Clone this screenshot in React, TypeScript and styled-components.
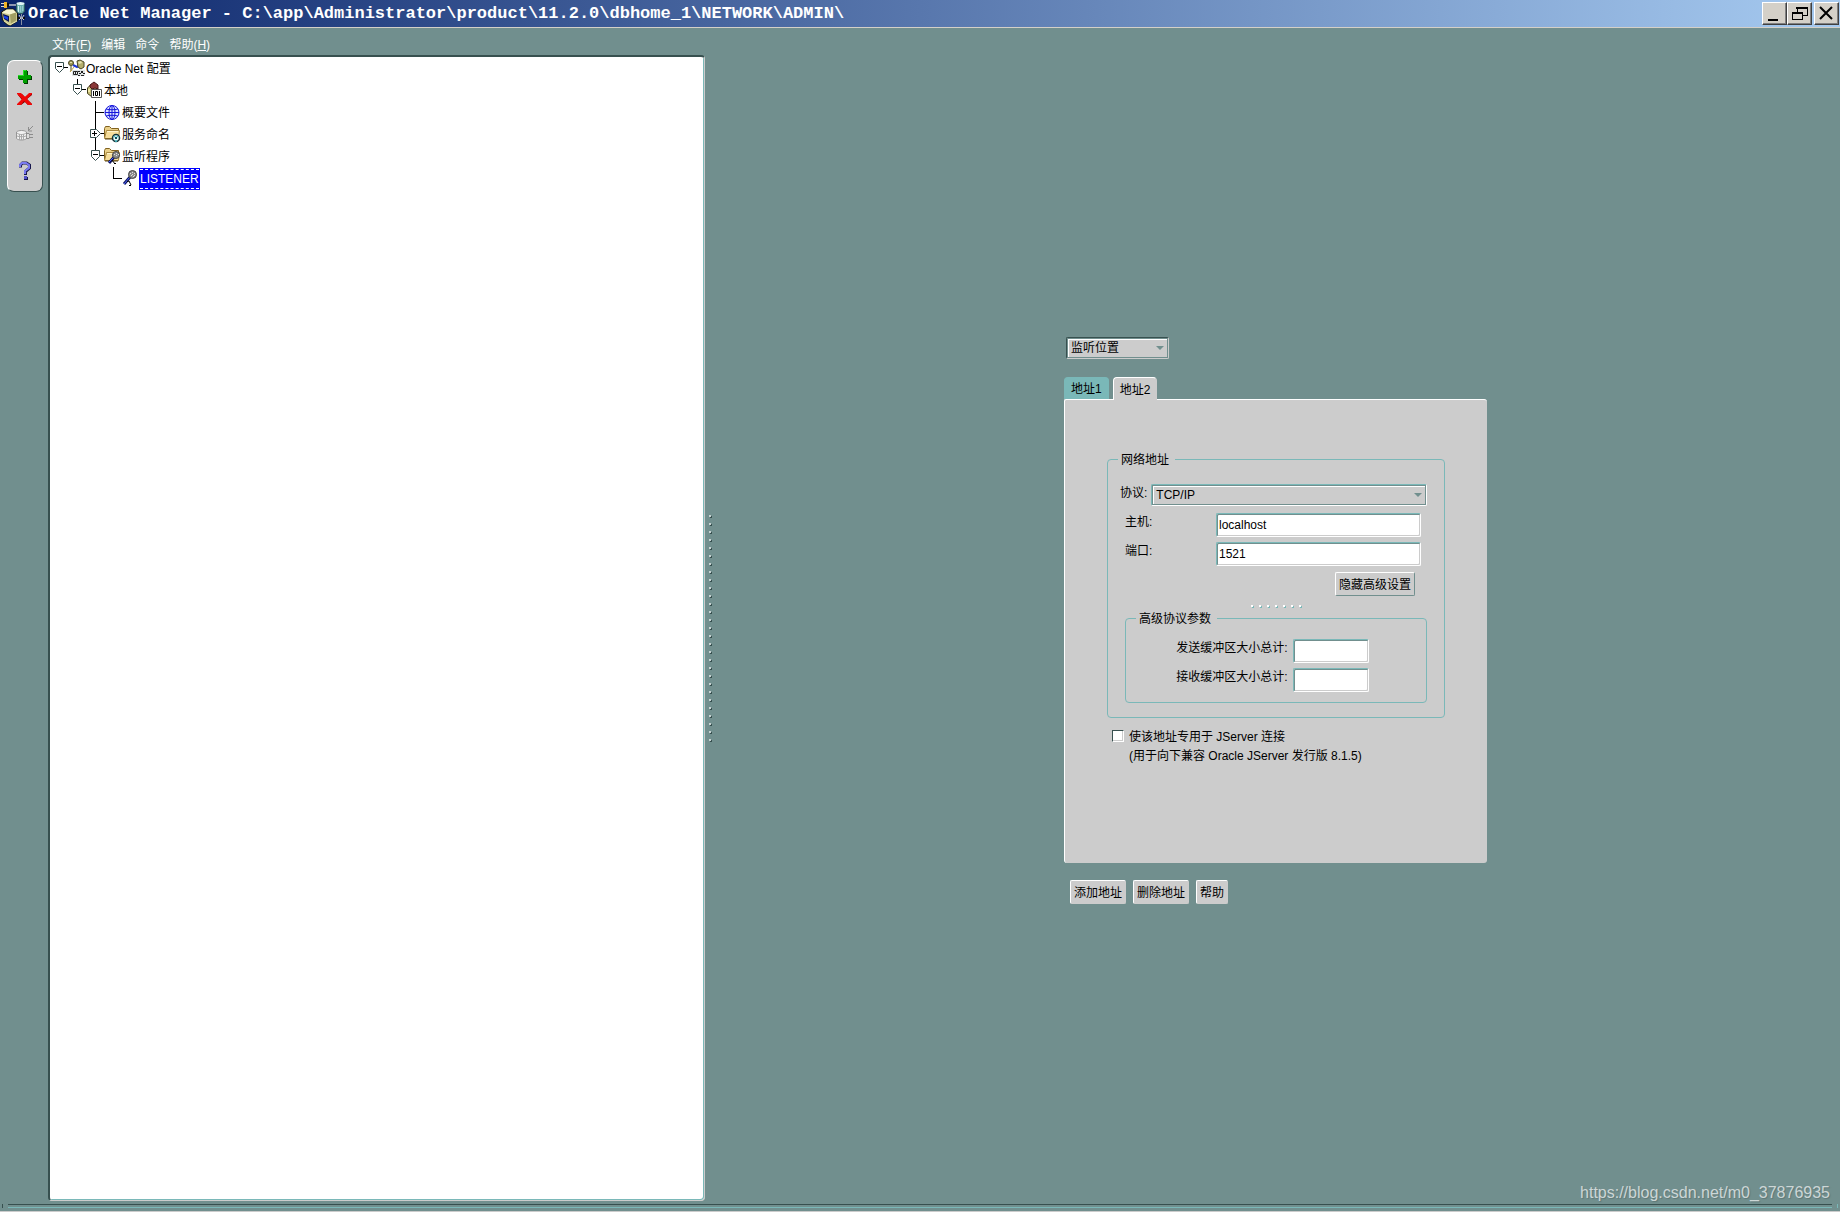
import React, { useState } from "react";
import styled, { createGlobalStyle, css } from "styled-components";

const color = {
  teal: "#718f8e",
  aqua: "#7ab8b8",
  dark: "#37504f",
  face: "#cccccc",
  chrome: "#d4d0c8",
};

const GlobalStyle = createGlobalStyle`
  * { box-sizing: border-box; }
  body {
    margin: 0;
    background: ${color.teal};
    color: #000;
    font: 12px/18px "Liberation Sans", "Noto Sans CJK SC", sans-serif;
  }
  button, input, select { font: inherit; color: inherit; margin: 0; border-radius: 0; }
`;

const Window = styled.div`
  position: relative;
  min-height: 100vh;
  display: flex;
  flex-direction: column;
  background: ${color.teal};
`;

/* ---------- title bar ---------- */
const TitleBar = styled.header`
  display: flex;
  align-items: center;
  height: 28px;
  padding-right: 1px;
  border-bottom: 1px solid ${color.chrome};
  background: linear-gradient(90deg, #0a246a, #a6caf0);
`;

const Title = styled.h1`
  flex: 1;
  margin: 0;
  padding-left: 2px;
  overflow: hidden;
  white-space: nowrap;
  color: #fff;
  font: bold 17px/26px "Liberation Mono", "Noto Sans CJK SC", monospace;
`;

const WindowButton = styled.button<{ $apart?: boolean }>`
  display: grid;
  place-items: center;
  width: 25px;
  height: 23px;
  padding: 0;
  margin-left: ${(p) => (p.$apart ? "2px" : "0")};
  background: ${color.chrome};
  border: 1px solid;
  border-color: #fff #404040 #404040 #fff;
  box-shadow: inset -1px -1px 0 #808080;
`;

/* ---------- menu ---------- */
const MenuBar = styled.nav`
  display: flex;
  gap: 10px;
  height: 27px;
  padding: 8px 0 0 52px;
`;

const MenuItem = styled.button`
  height: 18px;
  padding: 0;
  border: 0;
  background: none;
  color: #fff;
  white-space: nowrap;
`;

/* ---------- main areas ---------- */
const Workspace = styled.main`
  flex: 1;
  display: grid;
  grid-template-columns: 48px minmax(0, 657fr) 6px minmax(0, 1129fr);
`;

const ToolColumn = styled.aside`
  padding: 5px 5px 0 7px;
`;

const Toolbar = styled.div`
  display: flex;
  flex-direction: column;
  align-items: center;
  padding: 5px 0 9px;
  border: 1px solid;
  border-color: #fff ${color.dark} ${color.dark} #fff;
  border-radius: 7px;
  background: ${color.face};
`;

const ToolButton = styled.button<{ $space?: number }>`
  display: grid;
  place-items: center;
  width: 26px;
  height: 22px;
  padding: 0;
  margin-top: ${(p) => p.$space ?? 0}px;
  border: 0;
  background: none;
`;

const TreePanel = styled.section`
  padding-top: 1px;
  background: #fff;
  border: solid;
  border-width: 2px 1px 1px 2px;
  border-color: ${color.dark} ${color.face} ${color.face} ${color.dark};
  border-radius: 4px;
  box-shadow: inset -1px -1px 0 ${color.aqua};
`;

const Tree = styled.ul`
  list-style: none;
  margin: 0;
  padding: 0;
`;

const TreeRow = styled.li<{ $depth: number }>`
  display: flex;
  align-items: center;
  height: 22px;
  padding-left: ${(p) => p.$depth * 18}px;
  white-space: nowrap;
`;

const Drawing = styled.svg`
  display: block;
  flex: none;
  overflow: visible;
`;

const NodeLabel = styled.span<{ $selected?: boolean }>`
  line-height: 22px;
  ${(p) =>
    p.$selected &&
    css`
      line-height: 18px;
      color: #fff;
      background: #00f;
      border: 1px dashed #fff;
      border-width: 1px 0;
      outline: 1px solid #00f;
    `}
`;

const Splitter = styled.div`
  display: flex;
  flex-direction: column;
  justify-content: center;
  align-items: flex-end;
  gap: 6px;
`;

const Dot = styled.i<{ $light: string; $shade: string }>`
  width: 2px;
  height: 2px;
  background: ${(p) => p.$light};
  box-shadow: 1px 1px 0 ${(p) => p.$shade};
`;

const Detail = styled.section`
  display: flex;
  align-items: center;
  justify-content: center;
  padding-bottom: 16px;
`;

const Form = styled.form`
  width: 423px;
`;

/* ---------- controls ---------- */
const SelectBox = styled.span<{ $tone: string; $edge: string }>`
  position: relative;
  display: block;
  height: 22px;
  border: 1px solid;
  border-color: ${(p) => p.$tone} ${(p) => p.$edge} ${(p) => p.$edge} ${(p) => p.$tone};
  border-radius: 2px;
  background: ${color.face};

  &::after {
    content: "";
    position: absolute;
    top: 8px;
    right: 4px;
    border: 4px solid transparent;
    border-top-color: ${color.teal};
    border-bottom: 0;
    pointer-events: none;
  }
`;

const Select = styled.select`
  appearance: none;
  display: block;
  width: 100%;
  height: 20px;
  padding: 0 14px 0 3px;
  border: 1px solid ${color.teal};
  background: transparent;
  box-shadow: inset 1px 1px 0 #fff;
  outline: 0;
`;

const LocationSelect = styled.div`
  width: 103px;
  margin: 0 0 18px 2px;
`;

const TextInput = styled.input<{ $short?: boolean }>`
  width: ${(p) => (p.$short ? 76 : 205)}px;
  height: 24px;
  padding: 0 2px;
  background: #fff;
  border: 1px solid;
  border-color: ${color.aqua} #fff #fff ${color.aqua};
  border-radius: 2px;
  box-shadow: inset 1px 1px 0 ${color.teal}, inset -1px -1px 0 ${color.face};
  outline: 0;
`;

const Button = styled.button<{ $shade?: string }>`
  height: 24px;
  padding: 2px 3px 0;
  background: ${color.face};
  border: 1px solid;
  border-color: #fff ${(p) => p.$shade ?? color.face} ${(p) => p.$shade ?? color.face} #fff;
  border-radius: 2px;
  white-space: nowrap;
`;

const Tabs = styled.div`
  display: flex;
  gap: 4px;
`;

const Tab = styled.button<{ $active?: boolean }>`
  height: 22px;
  padding: 2px 6px 0;
  border: 1px solid ${color.aqua};
  border-bottom: 0;
  border-radius: 4px 4px 0 0;
  background: ${color.aqua};
  ${(p) =>
    p.$active &&
    css`
      height: 23px;
      margin-bottom: -1px;
      z-index: 1;
      background: ${color.face};
      border-color: #fff ${color.face} ${color.face} #fff;
    `}
`;

const TabPanel = styled.div`
  padding: 52px 42px 97px;
  background: ${color.face};
  border: solid #fff;
  border-width: 1px 0 0 1px;
  border-radius: 2px 3px 3px 3px;
`;

const Group = styled.fieldset<{ $nested?: boolean }>`
  min-width: 0;
  margin: ${(p) => (p.$nested ? "4px 17px 0" : "0")};
  padding: ${(p) => (p.$nested ? "12px 0 10px" : "16px 0 14px")};
  border: 1px solid ${color.aqua};
  border-radius: 4px;
`;

const Legend = styled.legend`
  margin-left: 10px;
  padding: 0 6px 0 3px;
  line-height: 16px;
`;

const ProtocolRow = styled.div`
  display: flex;
  gap: 4px;
  padding: 0 17px 0 12px;
  margin-bottom: 7px;

  ${SelectBox} { flex: 1; }
`;

const FieldRow = styled.div`
  display: flex;
  justify-content: space-between;
  padding: 0 23px 0 17px;
  margin-bottom: 5px;
`;

const BufferRow = styled.div`
  display: flex;
  justify-content: center;
  gap: 5px;
  padding-right: 7px;

  & + & { margin-top: 5px; }
`;

const ToggleRow = styled.div`
  display: flex;
  justify-content: flex-end;
  margin-top: 6px;
  padding-right: 29px;
`;

const DotRow = styled.div`
  display: flex;
  justify-content: center;
  gap: 6px;
  margin-top: 9px;
`;

const Dedicated = styled.div`
  display: flex;
  gap: 5px;
  margin-top: 10px;
  padding-left: 5px;
  line-height: 19px;
`;

const Checkbox = styled.input`
  appearance: none;
  width: 12px;
  height: 12px;
  margin-top: 2px;
  background: #fff;
  border: 1px solid;
  border-color: ${color.dark} #fff #fff ${color.dark};
  box-shadow: inset -1px -1px 0 ${color.face};

  &:checked { background: ${color.dark}; }
`;

const Actions = styled.div`
  display: flex;
  gap: 7px;
  padding: 17px 0 0 6px;
`;

/* ---------- status strip ---------- */
const StatusBar = styled.footer`
  display: flex;
  justify-content: space-between;
  gap: 5px;
  height: 11px;
  padding: 3px 2px 0;
  border-bottom: 1px solid ${color.face};
`;

const Tick = styled.i<{ $color: string }>`
  width: 1px;
  height: 4px;
  background: ${(p) => p.$color};
`;

const Groove = styled.div`
  flex: 1;
  height: 4px;
  border-top: 1px solid ${color.dark};
  border-bottom: 1px solid ${color.aqua};
`;

const Watermark = styled.a`
  position: absolute;
  right: 10px;
  bottom: 9px;
  color: #ccd6d6;
  font-size: 16px;
  line-height: 20px;
  text-decoration: none;
  text-shadow: 1px 1px 1px #5f7776;
`;

/* ---------- drawings ---------- */
const AppIcon = () => (
  <Drawing width="26" height="26" viewBox="0 0 26 26" aria-hidden="true">
    <path d="M1.500 11l5-3h7l4 4v8l-7 4.500-3-.5-5-5z" fill="#c9c78c" stroke="#16160e" />
    <path d="M2 11.500L7 8.500h6l3 3-6 2z" fill="#f6f4d0" />
    <path d="M10 13.500l6-2v8l-5 3z" fill="#a29f62" />
    <path d="M3 13l6 2v6l-5-3z" fill="#0a1450" />
    <path d="M4 14.500l4 1.500v3l-4-2z" fill="#1840e8" />
    <path d="M4 20l6 4 7-4" fill="none" stroke="#e9e6b0" />
    <path d="M1 2.500h3M1 5.500h3" stroke="#d8d8d8" />
    <path d="M4 1h3v6H4z" fill="#f0b428" />
    <path d="M7 2h2v4H7z" fill="#111" />
    <path d="M9 4h7" stroke="#9098b0" strokeWidth="2" />
    <path d="M16.500 3v7l2 2.500h4l2-2.500V3z" fill="#6fb0b0" stroke="#2c5a60" />
    <ellipse cx="20.500" cy="2.500" rx="4" ry="1.500" fill="#e0f6f6" />
    <path d="M18.500 5v6" stroke="#d6f2f2" />
    <path d="M20.500 5v6M22.500 5v5" stroke="#95cccc" />
    <path d="M21.500 13v11" stroke="#8890a4" />
    <path d="M19 14l2 3-2 2M24 14l-2 3 2 2" fill="none" stroke="#c8ccd6" />
    <path d="M18 16h2v2h-2zM23 16h2v2h-2z" fill="#101010" />
  </Drawing>
);

const MinimizeGlyph = () => (
  <Drawing width="19" height="17" viewBox="0 0 19 17" aria-hidden="true">
    <path d="M3 14h10v2H3z" />
  </Drawing>
);

const RestoreGlyph = () => (
  <Drawing width="17" height="15" viewBox="0 0 17 15" shapeRendering="crispEdges" aria-hidden="true">
    <path d="M6 1h10v8h-4M6 1v5" fill="none" stroke="#000" />
    <path d="M5 1h11v2H5zM1 6h11v2H1z" />
    <path d="M1.500 6.500h10v7h-10z" fill="none" stroke="#000" />
  </Drawing>
);

const CloseGlyph = () => (
  <Drawing width="15" height="15" viewBox="0 0 15 15" aria-hidden="true">
    <path d="M1 1l12 12M13 1L1 13" stroke="#000" strokeWidth="2" />
  </Drawing>
);

const AddGlyph = () => (
  <Drawing width="15" height="15" viewBox="0 0 15 15" shapeRendering="crispEdges" aria-hidden="true">
    <path d="M6 1h4v5h4v4h-4v4H6v-4H1V6h5z" fill="#003c00" />
    <path d="M5 0h4v5h4v4H9v4H5V9H0V5h5z" fill="#00a000" />
    <path d="M5 0h3v1H6v5H0V5h5z" fill="#26e026" />
  </Drawing>
);

const DeleteGlyph = () => (
  <Drawing width="16" height="13" viewBox="0 0 16 13" aria-hidden="true">
    <path d="M1 1h4l3 3 4-3h3v1l-5 4 5 5v1h-4L8 9l-4 3H1v-1l4-4-4-5z" fill="#7c0000" />
    <path d="M0 0h4l4 4 4-4h3v1l-5 5 5 5v1h-4L7 8l-3 4H0v-1l5-5-5-5z" fill="#f00808" />
  </Drawing>
);

const ConnectGlyph = () => (
  <Drawing width="18" height="16" viewBox="0 0 18 16" aria-hidden="true">
    <path d="M.5 6v6.500c2 2 8 2 10 0V6c-2-2-8-2-10 0z" fill="#f2f2f2" stroke="#969696" />
    <path d="M1 7c2 2 7 2 9 0M1 10c2 1 7 1 9 0M3.500 8v6M5.500 8v6M7.500 8v6" fill="none" stroke="#aaa" />
    <path d="M10 7.500h3v5h-3M13 8.500h4M13 11.500h4M17 0l-5 5M12.500 1v4H16" fill="none" stroke="#8c8c8c" />
    <path d="M11 8h2v4h-2z" fill="#ddd" />
  </Drawing>
);

const HelpGlyph = () => (
  <Drawing width="14" height="20" viewBox="0 0 14 20" aria-hidden="true">
    <path d="M2.500 6.500V4l2-2h4l3 2v3l-4 3.500V14" fill="none" stroke="#16164c" strokeWidth="3" />
    <path d="M2 6V4l2-2h4l3 2v3l-4 3v3" fill="none" stroke="#7a7af0" strokeWidth="2" />
    <path d="M6 15h3v1h1v3H6z" fill="#16164c" />
    <path d="M6 15h3v3H6z" fill="#5050c8" />
  </Drawing>
);

type BranchKind = "root" | "open" | "leaf" | "closed" | "openLast" | "corner";

const Branch = ({ kind }: { kind: BranchKind }) => (
  <Drawing width="18" height="22" viewBox="0 0 18 22" shapeRendering="crispEdges" aria-hidden="true">
    {kind === "open" && <path d="M9.500-1v6" stroke="#000" />}
    {kind === "leaf" && <path d="M9.500-1v23M9 10.500h9" fill="none" stroke="#000" />}
    {kind === "corner" && <path d="M9.500-1v11.500H18" fill="none" stroke="#000" />}
    {kind === "closed" && (
      <>
        <path d="M9.500 0v22M14 9.500h4" fill="none" stroke="#000" />
        <path d="M4.500 5.500h6l4 4-4 4h-6z" fill="#fff" stroke="#37504f" shapeRendering="auto" />
        <path d="M6 9.500h5M8.500 7v5" stroke="#000" />
      </>
    )}
    {(kind === "root" || kind === "open" || kind === "openLast") && (
      <>
        {kind === "openLast" && <path d="M9.500 0v5" stroke="#000" />}
        <path d="M13 9.500h5" stroke="#000" />
        <path d="M5.500 4.500h8v6l-4 4-4-4z" fill="#fff" stroke="#37504f" shapeRendering="auto" />
        <path d="M7 8.500h5" stroke="#000" />
      </>
    )}
  </Drawing>
);

const NetworkIcon = () => (
  <Drawing width="18" height="18" viewBox="0 0 18 18" aria-hidden="true">
    <path d="M5 5l4 2 3-3" fill="none" stroke="#2038d8" strokeWidth="2" />
    <path d="M3 6v5M12 6v3" stroke="#4f4b22" />
    <circle cx="3" cy="3" r="2.500" fill="#a09a58" stroke="#4c4926" />
    <path d="M2 2h2v1H2z" fill="#e6e2b0" />
    <path d="M9 1l3-1 4 2v5l-3 2-3-2z" fill="#b4ae6c" stroke="#4c4926" />
    <path d="M10 2l3-1 1 2-3 1z" fill="#e6e2b0" />
    <path d="M2 12l4-5" stroke="#c8a43c" />
    <path d="M4 10h13v6H4z" fill="#dfe4e4" />
    <path d="M5.500 11.500h4v3h-4z" fill="none" stroke="#222" />
    <path d="M7 12h1v2H7zM10 11h2v1h-2zM11 13h2v1h-2zM10 15h2v1h-2zM13 11h2v2h-2zM15 13h2v1h-2zM13 15h3v1h-3z" fill="#222" />
  </Drawing>
);

const HomeIcon = () => (
  <Drawing width="18" height="18" viewBox="0 0 18 18" aria-hidden="true">
    <path d="M1.500 6l4-4 6 4v8l-6 .5-4-3z" fill="#c4bd78" stroke="#423e1b" />
    <path d="M4 3l4-3 4 3v4l-3-1-3 1-2-2z" fill="#8a3838" stroke="#481717" />
    <path d="M2 7h2v3H2zM7 7h2v2H7z" fill="#f0e9a5" />
    <path d="M5.500 7.500h10v8h-10z" fill="#fff" stroke="#555" />
    <path d="M7.500 9v5M13.500 9v5M9.500 9.500h2v4h-2z" fill="none" stroke="#000" />
  </Drawing>
);

const GlobeIcon = () => (
  <Drawing width="18" height="18" viewBox="0 0 18 18" aria-hidden="true">
    <circle cx="8" cy="8.500" r="7" fill="#dce3ff" stroke="#1515dc" />
    <ellipse cx="8" cy="8.500" rx="3" ry="7" fill="none" stroke="#1515dc" />
    <path d="M1 8.500h14M8 1.500v14M2 5c4 1 8 1 12 0M2 12c4-1 8-1 12 0" fill="none" stroke="#1515dc" />
  </Drawing>
);

const FolderShape = () => (
  <>
    <path d="M.5 11.500V2.500l1-2h4l2 2h7v9z" fill="#e9cf88" stroke="#80611f" />
    <path d="M.5 12.500l2-8h13l-1 8z" fill="#f6dd9a" stroke="#a8873d" />
    <path d="M3 5.500h11" stroke="#fff5cd" />
    <path d="M1 13h13" stroke="#5b4514" />
  </>
);

const ServiceFolderIcon = () => (
  <Drawing width="18" height="18" viewBox="0 0 18 18" aria-hidden="true">
    <FolderShape />
    <circle cx="12" cy="12" r="3.500" fill="#e8fafa" stroke="#123338" strokeWidth="1.500" />
    <path d="M10 10l1 1M14 10l-1 1M12 14v2" stroke="#46c0c8" strokeWidth="1.500" />
    <path d="M11 11h2v2h-2z" fill="#0c5058" />
  </Drawing>
);

const ListenerFolderIcon = () => (
  <Drawing width="18" height="18" viewBox="0 0 18 18" aria-hidden="true">
    <FolderShape />
    <path d="M11 8l-6 7" stroke="#0d145e" strokeWidth="3" />
    <path d="M10 9l-5 5" stroke="#4e65ff" />
    <path d="M8 12l3 4M10 15.500h2" fill="none" stroke="#000" />
    <circle cx="12" cy="7" r="3.500" fill="#8c8c8c" stroke="#444" />
    <path d="M10 6.500h1M12 5.500h1M12 7.500h1M14 6.500h1" stroke="#ddd" />
  </Drawing>
);

const ListenerIcon = () => (
  <Drawing width="18" height="18" viewBox="0 0 18 18" aria-hidden="true">
    <path d="M9 6l-7 8" stroke="#0d145e" strokeWidth="3" />
    <path d="M8 7l-6 7" stroke="#4e65ff" />
    <path d="M5 11.500l2-.5 2 4M7 15.500h2" fill="none" stroke="#000" />
    <circle cx="10.500" cy="4.500" r="4" fill="#8c8c8c" stroke="#444" />
    <path d="M8 3.500h1M10 2.500h1M10 4.500h1M12 3.500h1M9 5.500h1M12 5.500h1M11 6.500h1" stroke="#ddd" />
  </Drawing>
);

/* ---------- data ---------- */
const nodes: { label: string; depth: number; kind: BranchKind; Icon: React.FC; selected?: boolean }[] = [
  { label: "Oracle Net 配置", depth: 0, kind: "root", Icon: NetworkIcon },
  { label: "本地", depth: 1, kind: "open", Icon: HomeIcon },
  { label: "概要文件", depth: 2, kind: "leaf", Icon: GlobeIcon },
  { label: "服务命名", depth: 2, kind: "closed", Icon: ServiceFolderIcon },
  { label: "监听程序", depth: 2, kind: "openLast", Icon: ListenerFolderIcon },
  { label: "LISTENER", depth: 3, kind: "corner", Icon: ListenerIcon, selected: true },
];

const dots = (count: number, light: string, shade: string) =>
  Array.from({ length: count }, (_, i) => <Dot key={i} $light={light} $shade={shade} />);

export default function App() {
  const [tab, setTab] = useState(1);
  const [host, setHost] = useState("localhost");
  const [port, setPort] = useState("1521");

  return (
    <Window>
      <GlobalStyle />
      <TitleBar>
        <AppIcon />
        <Title>{"Oracle Net Manager - C:\\app\\Administrator\\product\\11.2.0\\dbhome_1\\NETWORK\\ADMIN\\"}</Title>
        <WindowButton aria-label="Minimize"><MinimizeGlyph /></WindowButton>
        <WindowButton aria-label="Restore"><RestoreGlyph /></WindowButton>
        <WindowButton aria-label="Close" $apart><CloseGlyph /></WindowButton>
      </TitleBar>

      <MenuBar>
        <MenuItem>文件(<u>F</u>)</MenuItem>
        <MenuItem>编辑</MenuItem>
        <MenuItem>命令</MenuItem>
        <MenuItem>帮助(<u>H</u>)</MenuItem>
      </MenuBar>

      <Workspace>
        <ToolColumn>
          <Toolbar role="toolbar">
            <ToolButton aria-label="Create"><AddGlyph /></ToolButton>
            <ToolButton aria-label="Delete"><DeleteGlyph /></ToolButton>
            <ToolButton aria-label="Connect" $space={13} disabled><ConnectGlyph /></ToolButton>
            <ToolButton aria-label="Help" $space={15}><HelpGlyph /></ToolButton>
          </Toolbar>
        </ToolColumn>

        <TreePanel>
          <Tree role="tree">
            {nodes.map(({ label, depth, kind, Icon, selected }) => (
              <TreeRow key={label} role="treeitem" aria-selected={!!selected} $depth={depth}>
                <Branch kind={kind} />
                <Icon />
                <NodeLabel $selected={selected}>{label}</NodeLabel>
              </TreeRow>
            ))}
          </Tree>
        </TreePanel>

        <Splitter role="separator" aria-orientation="vertical">
          {dots(29, "#c6d2d2", color.dark)}
        </Splitter>

        <Detail>
          <Form onSubmit={(e) => e.preventDefault()}>
            <LocationSelect>
              <SelectBox $tone={color.dark} $edge={color.face}>
                <Select aria-label="监听位置">
                  <option>监听位置</option>
                </Select>
              </SelectBox>
            </LocationSelect>

            <Tabs role="tablist">
              {["地址1", "地址2"].map((name, i) => (
                <Tab key={name} type="button" role="tab" aria-selected={tab === i} $active={tab === i} onClick={() => setTab(i)}>
                  {name}
                </Tab>
              ))}
            </Tabs>

            <TabPanel role="tabpanel">
              <Group>
                <Legend>网络地址</Legend>
                <ProtocolRow>
                  <label htmlFor="protocol">协议:</label>
                  <SelectBox $tone={color.aqua} $edge="#fff">
                    <Select id="protocol">
                      <option>TCP/IP</option>
                    </Select>
                  </SelectBox>
                </ProtocolRow>
                <FieldRow>
                  <label htmlFor="host">主机:</label>
                  <TextInput id="host" value={host} onChange={(e) => setHost(e.target.value)} />
                </FieldRow>
                <FieldRow>
                  <label htmlFor="port">端口:</label>
                  <TextInput id="port" value={port} onChange={(e) => setPort(e.target.value)} />
                </FieldRow>
                <ToggleRow>
                  <Button type="button" $shade={color.teal}>隐藏高级设置</Button>
                </ToggleRow>
                <DotRow>{dots(7, "#fff", color.aqua)}</DotRow>
                <Group $nested>
                  <Legend>高级协议参数</Legend>
                  <BufferRow>
                    <label htmlFor="send">发送缓冲区大小总计:</label>
                    <TextInput id="send" $short />
                  </BufferRow>
                  <BufferRow>
                    <label htmlFor="receive">接收缓冲区大小总计:</label>
                    <TextInput id="receive" $short />
                  </BufferRow>
                </Group>
              </Group>

              <Dedicated>
                <Checkbox type="checkbox" id="jserver" />
                <label htmlFor="jserver">
                  使该地址专用于 JServer 连接
                  <br />
                  (用于向下兼容 Oracle JServer 发行版 8.1.5)
                </label>
              </Dedicated>
            </TabPanel>

            <Actions>
              <Button type="button">添加地址</Button>
              <Button type="button">删除地址</Button>
              <Button type="button">帮助</Button>
            </Actions>
          </Form>
        </Detail>
      </Workspace>

      <StatusBar>
        <Tick $color={color.dark} />
        <Groove />
        <Tick $color={color.aqua} />
      </StatusBar>
      <Watermark href="https://blog.csdn.net/m0_37876935">https://blog.csdn.net/m0_37876935</Watermark>
    </Window>
  );
}
